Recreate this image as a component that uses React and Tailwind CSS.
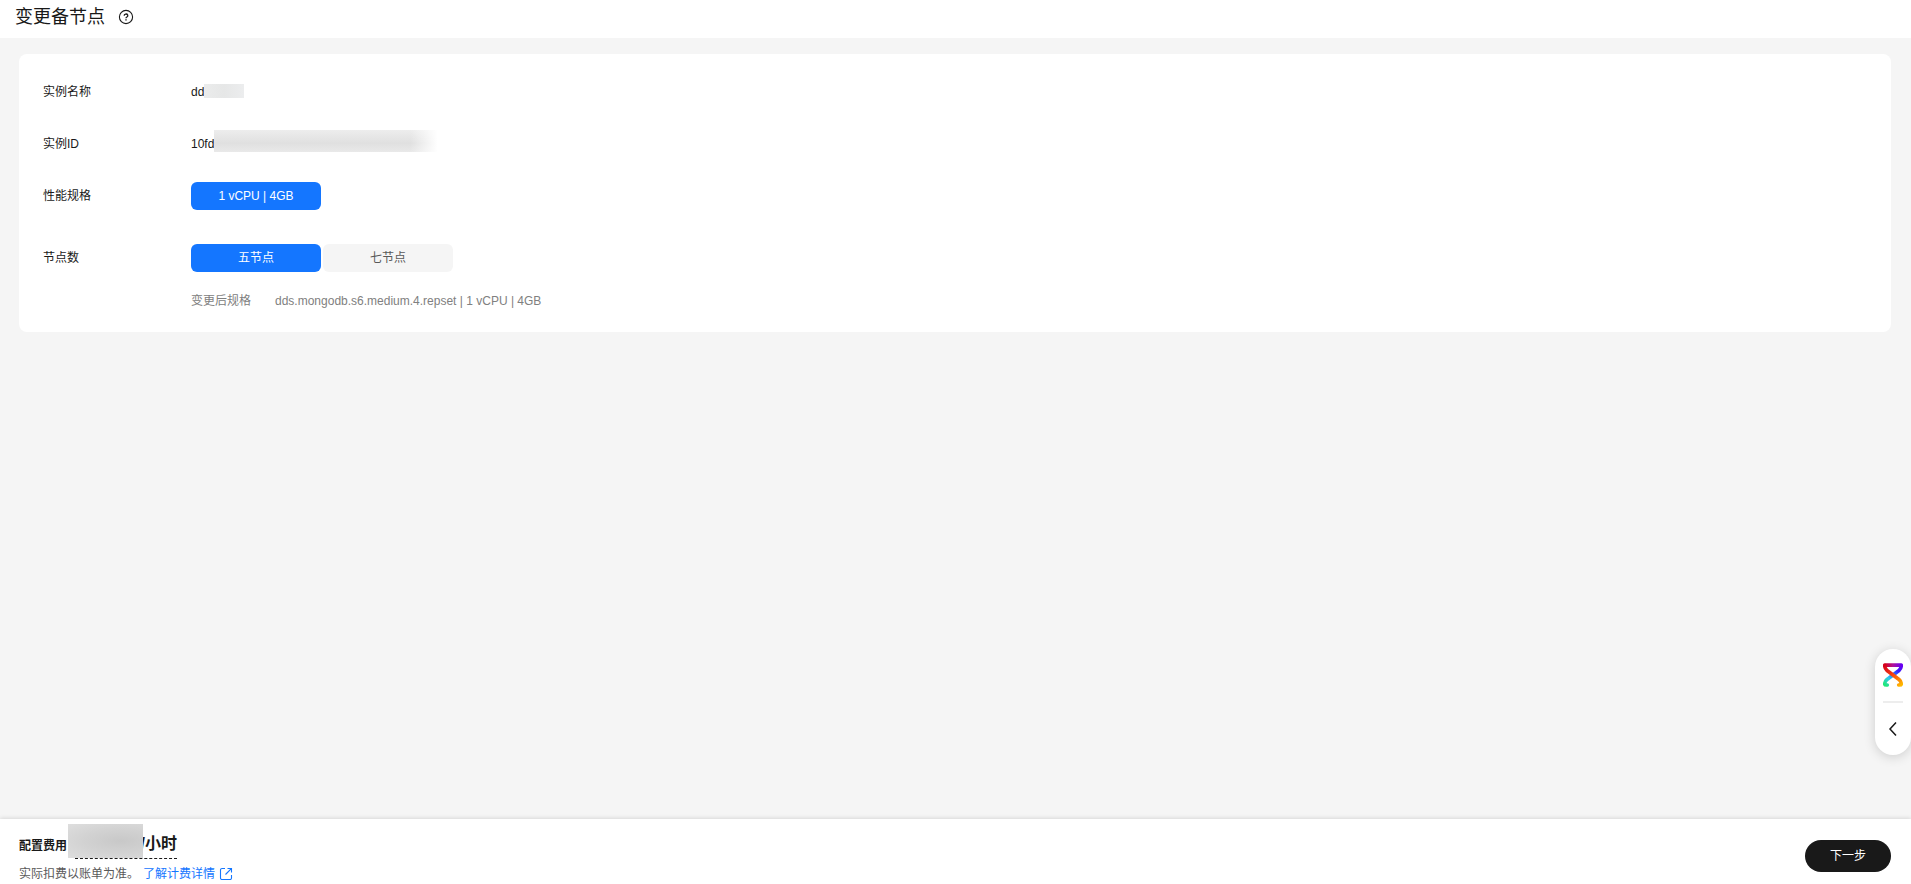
import React, { useState } from 'react';

const nodeOptions = ['五节点', '七节点'];

function HelpIcon() {
  return (
    <svg width="16" height="16" viewBox="0 0 16 16" fill="none" stroke="#191919">
      <circle cx="8" cy="8" r="6.6" strokeWidth="1.1" />
      <path d="M6.2 6.7a1.8 1.6 0 1 1 2.7 1.3c-.6.4-.9.6-.9 1.2" strokeWidth="1.3" />
      <path d="M8 10.2v1.3" strokeWidth="1.4" />
    </svg>
  );
}

function ExternalIcon() {
  return (
    <svg width="14" height="14" viewBox="0 0 14 14" fill="none" stroke="currentColor" strokeWidth="1.1">
      <path d="M6 1.5H3A1.5 1.5 0 0 0 1.5 3v8A1.5 1.5 0 0 0 3 12.5h8a1.5 1.5 0 0 0 1.5-1.5V8" />
      <path d="M8.5 1.5h4v4M12.3 1.7 6.5 7.5" />
    </svg>
  );
}

function AssistantLogo() {
  return (
    <svg width="20" height="24" viewBox="0 0 20 24" fill="none" strokeWidth="3.6" strokeLinecap="round" strokeLinejoin="round">
      <defs>
        <linearGradient id="cool" x1="18" y1="2" x2="2" y2="22" gradientUnits="userSpaceOnUse">
          <stop offset="0" stopColor="#6a00f0" />
          <stop offset="0.25" stopColor="#3a1cff" />
          <stop offset="0.45" stopColor="#2a70ff" />
          <stop offset="0.7" stopColor="#30c8f0" />
          <stop offset="1" stopColor="#22e878" />
        </linearGradient>
        <linearGradient id="warm" x1="2" y1="2" x2="18" y2="22" gradientUnits="userSpaceOnUse">
          <stop offset="0" stopColor="#d4001a" />
          <stop offset="0.5" stopColor="#fa4410" />
          <stop offset="1" stopColor="#ffb800" />
        </linearGradient>
        <linearGradient id="top" x1="2" y1="2" x2="18" y2="2" gradientUnits="userSpaceOnUse">
          <stop offset="0" stopColor="#d4001a" />
          <stop offset="0.5" stopColor="#b0109a" />
          <stop offset="1" stopColor="#6a00f0" />
        </linearGradient>
      </defs>
      <path d="M18.2 2.5Q18.5 5 16 7.5L4 16.5Q1.5 18.5 1.8 21.5Q2 22.2 4.3 22" stroke="url(#cool)" />
      <path d="M1.8 2.1h16.4" stroke="url(#top)" />
      <path d="M1.8 2.5Q1.5 5 4 7.500L16 16.5Q18.5 18.5 18.2 21.5Q18 22.2 15.7 22" stroke="url(#warm)" />
    </svg>
  );
}

function Row({ label, children }) {
  return (
    <div className="flex min-h-7 items-center">
      <dt className="w-[148px] shrink-0">{label}</dt>
      <dd className="flex items-center">{children}</dd>
    </div>
  );
}

function App() {
  const [nodes, setNodes] = useState('五节点');

  return (
    <div className="flex min-h-screen flex-col bg-[#f5f5f5] font-['Liberation_Sans','Noto_Sans_CJK_SC',sans-serif] text-xs text-[#191919]">
      <header className="flex h-[38px] items-center gap-[13px] bg-white px-[15px] pb-1">
        <h1 className="text-lg">变更备节点</h1>
        <button type="button" aria-label="帮助">
          <HelpIcon />
        </button>
      </header>

      <main className="grow pt-4 pr-5 pl-[19px]">
        <dl className="rounded-lg bg-white px-6 pt-6 pb-[17px]">
          <div className="flex flex-col gap-6">
            <Row label="实例名称">
              dd
              <span className="mb-[2px] h-[14px] w-10 bg-linear-to-r from-[#ebecec] via-[#e6e7e7] to-[#ecedee]" />
            </Row>
            <Row label="实例ID">
              10fd
              <span className="mb-[6px] h-[22px] w-[226px] bg-[linear-gradient(to_right,transparent_87%,white_99%),linear-gradient(#ededed,#e0e0e0_60%,#e9e9e9)]" />
            </Row>
            <Row label="性能规格">
              <button type="button" className="h-7 w-[130px] rounded-md bg-[#1476ff] text-white">
                1 vCPU | 4GB
              </button>
            </Row>
          </div>
          <div className="mt-[34px]">
            <Row label="节点数">
              <div className="flex gap-[2px]">
                {nodeOptions.map((name) => (
                  <button
                    key={name}
                    type="button"
                    aria-pressed={nodes === name}
                    onClick={() => setNodes(name)}
                    className={`h-7 w-[130px] rounded-md ${nodes === name ? 'bg-[#1476ff] text-white' : 'bg-[#f5f5f5] text-[#595959]'}`}
                  >
                    {name}
                  </button>
                ))}
              </div>
            </Row>
          </div>
          <div className="mt-[15px] ml-[148px] flex h-7 items-center gap-6 text-[#808080]">
            <dt>变更后规格</dt>
            <dd>dds.mongodb.s6.medium.4.repset | 1 vCPU | 4GB</dd>
          </div>
        </dl>
      </main>

      <footer className="flex items-center justify-between bg-white pt-[5px] pr-5 pb-px pl-[19px] shadow-[0_-1px_4px_rgba(0,0,0,0.12)]">
        <div>
          <div className="flex h-9 items-start font-bold">
            <span className="leading-[44px]">配置费用</span>
            <span className="z-10 ml-px h-[34px] w-[75px] bg-[radial-gradient(ellipse_at_70%_50%,#c8c8c8,#d2d2d2_50%,#dedede)]" />
            <span className="-ml-[68px] h-[35px] w-[102px] border-b border-dashed border-[#191919] text-right text-base leading-[40px]">
              /小时
            </span>
          </div>
          <p className="mt-[5px] flex h-[18px] items-center gap-1 text-[#595959]">
            实际扣费以账单为准。
            <a href="#billing" className="flex items-center gap-1 text-[#1476ff]">
              了解计费详情
              <ExternalIcon />
            </a>
          </p>
        </div>
        <button type="button" className="mt-1 h-8 w-[86px] rounded-full bg-[#191919] text-white">
          下一步
        </button>
      </footer>

      <aside className="fixed right-0 bottom-[129px] flex w-9 flex-col items-center rounded-full bg-white pt-[14px] pb-[18px] shadow-[0_2px_12px_rgba(0,0,0,0.16)]">
        <button type="button" aria-label="智能助手">
          <AssistantLogo />
        </button>
        <hr className="mt-[14px] w-5 border-t-2 border-[#ededed]" />
        <button type="button" aria-label="展开" className="mt-[18px]">
          <svg width="16" height="16" viewBox="0 0 16 16" fill="none" stroke="#191919" strokeWidth="1.5">
            <path d="M11 1.5 5 8l6 6.5" />
          </svg>
        </button>
      </aside>
    </div>
  );
}

export default App;
